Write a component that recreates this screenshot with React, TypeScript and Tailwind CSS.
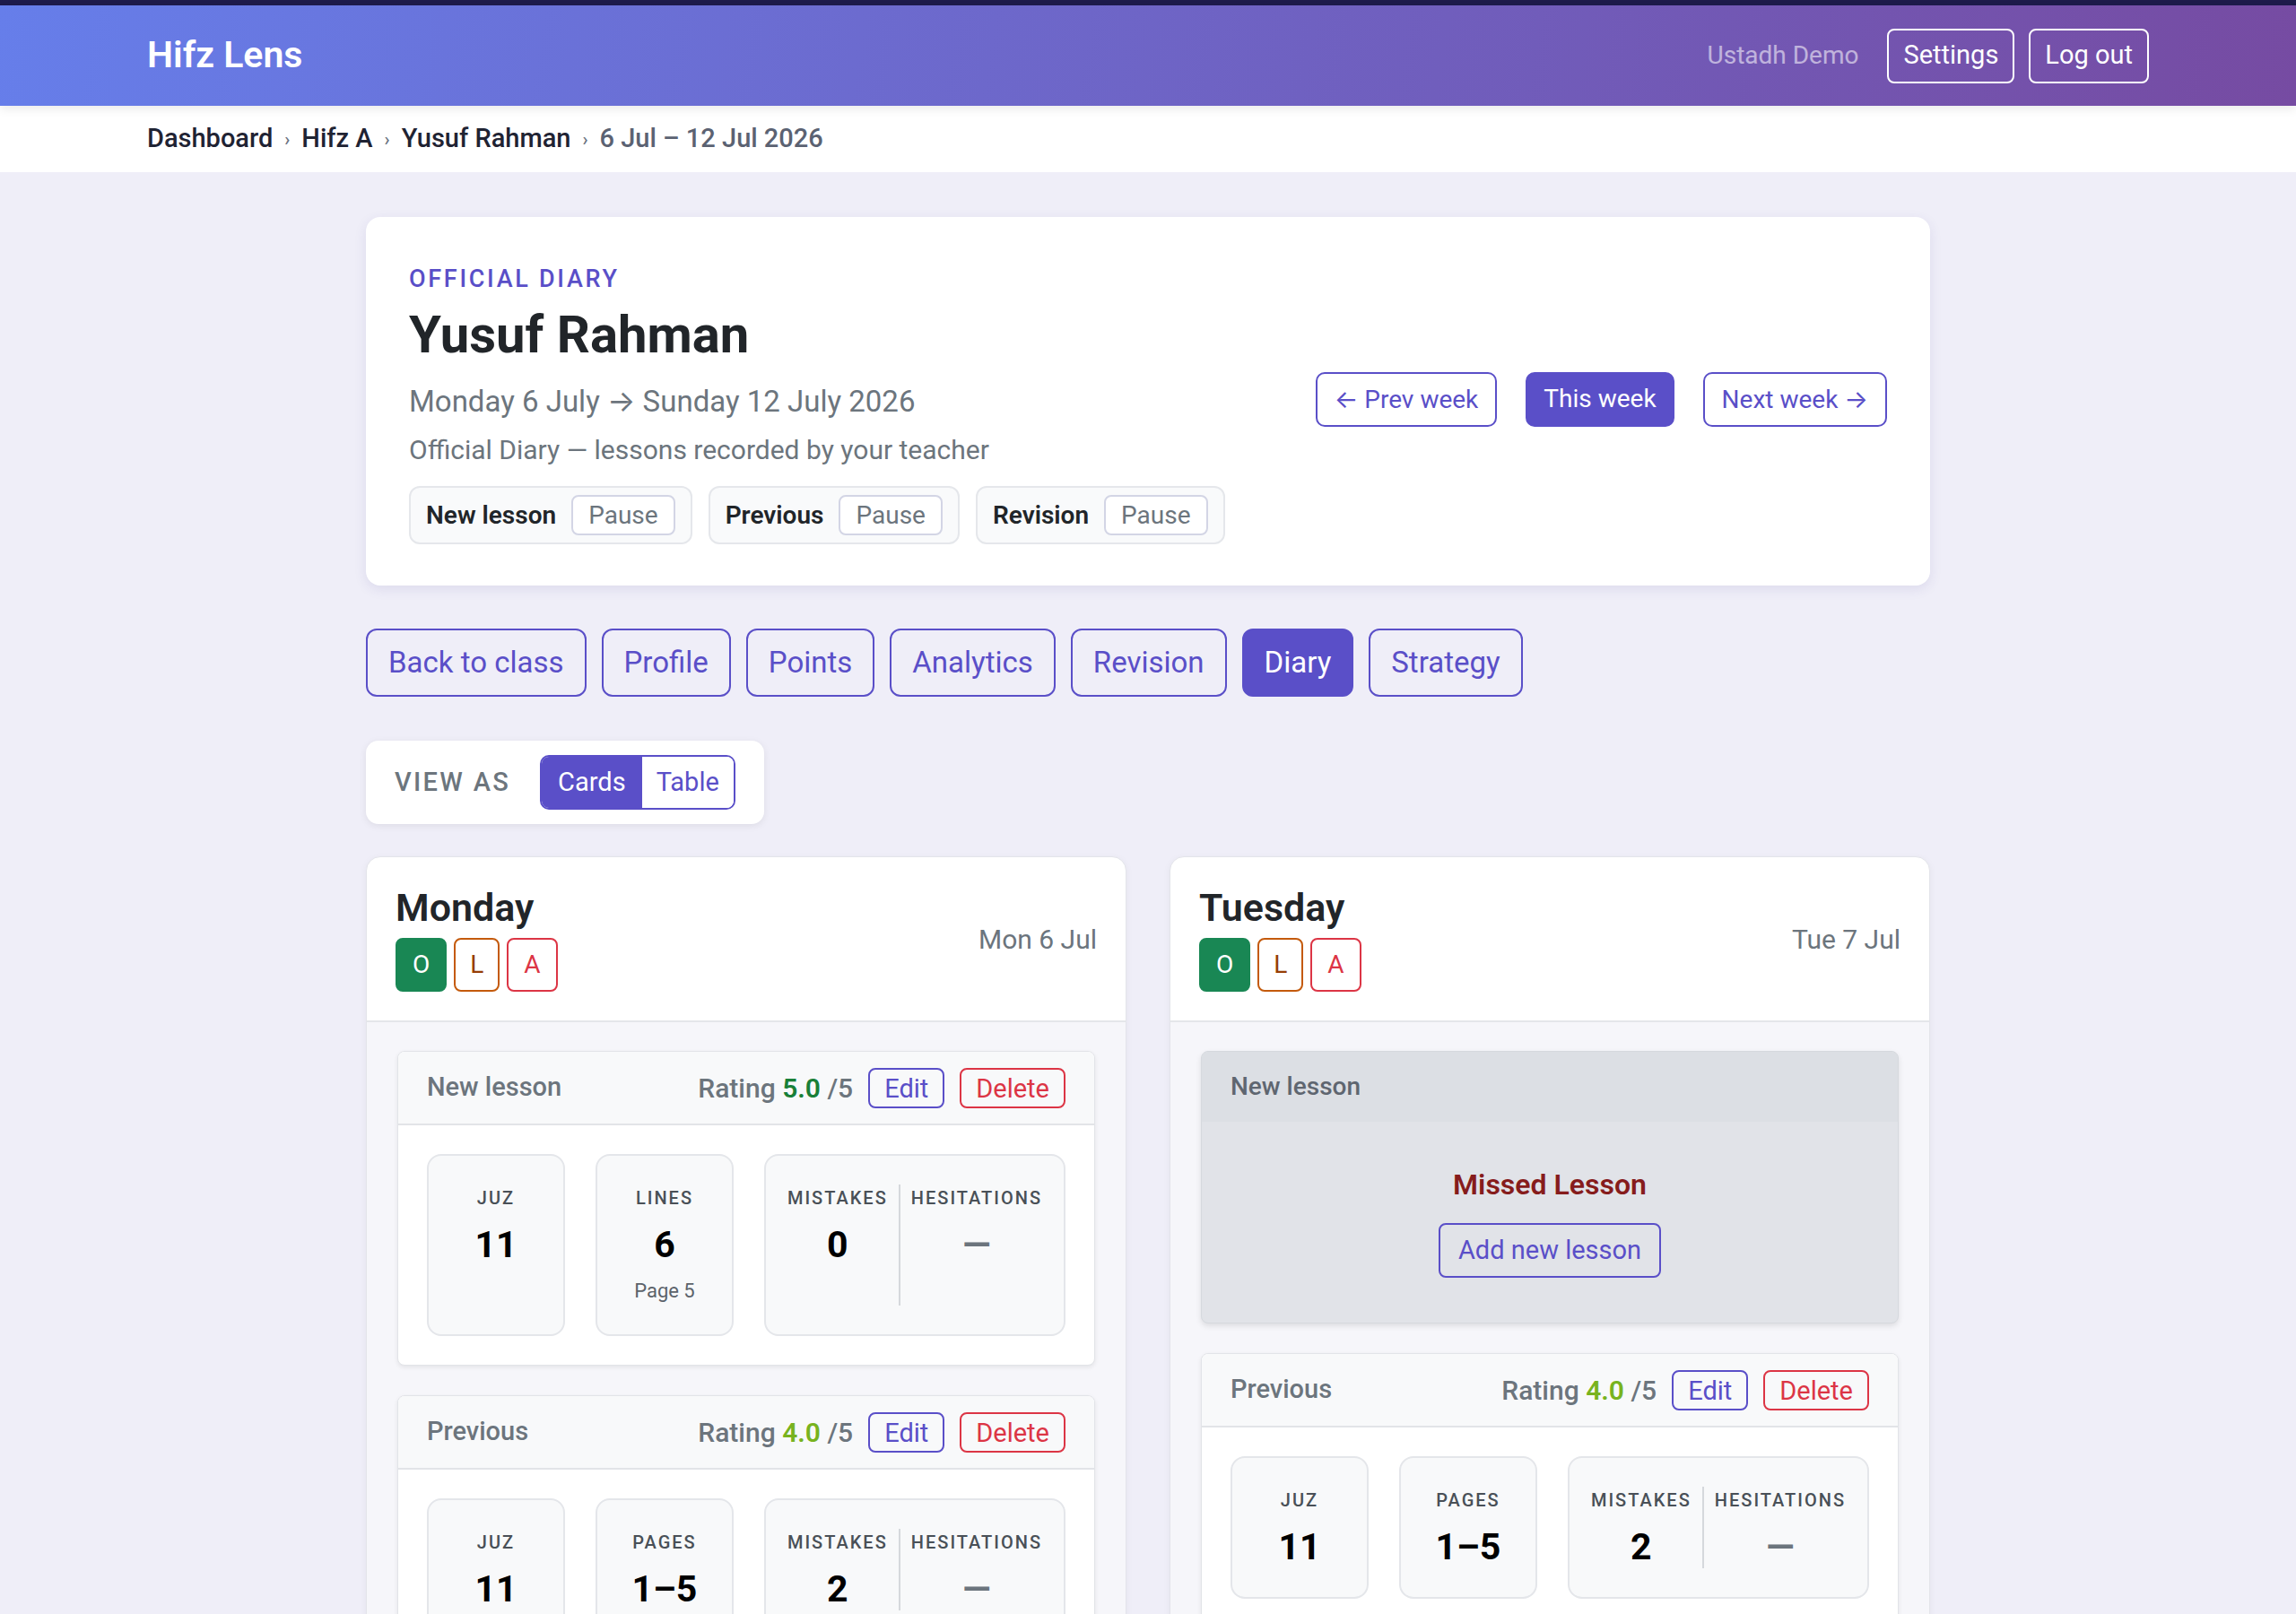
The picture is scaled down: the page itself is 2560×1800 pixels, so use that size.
import React from "react";

type Stat = { label: string; value: string; sub?: string };
type Lesson = {
  title: string;
  rating?: string;
  ratingColor?: string;
  missed?: boolean;
  stats?: Stat[];
  mistakes?: string;
  hesitations?: string;
};

function StatBox({ s }: { s: Stat }) {
  return (
    <div className="flex-1 flex flex-col items-center rounded-[16px] border-2 border-[#e4e6ea] bg-[#f8f9fa] py-[32px]">
      <div className="text-[20px] leading-[30px] tracking-[0.1em] font-medium text-[#495057] uppercase">{s.label}</div>
      <div className="mt-[13px] text-[41px] leading-[48px] font-bold text-[#000]">{s.value}</div>
      {s.sub && <div className="mt-[11px] text-[22px] leading-[33px] text-[#5c636a]">{s.sub}</div>}
    </div>
  );
}

function LessonCard({ l }: { l: Lesson }) {
  if (l.missed) {
    return (
      <div className="rounded-[8px] border border-[#d6d9de] bg-[#e1e3e8] shadow-[0_3px_6px_rgba(0,0,0,0.10)] overflow-hidden">
        <div className="h-[78px] px-[32px] flex items-center bg-[#dcdfe4] text-[28px] font-medium text-[#5f6670]">{l.title}</div>
        <div className="flex flex-col items-center pt-[48px] pb-[50px]">
          <div className="text-[32px] leading-[45px] font-semibold text-[#861c1c]">Missed Lesson</div>
          <button className="mt-[20px] h-[61px] px-[20px] rounded-[8px] border-2 border-[#5a4fc8] text-[29px] text-[#5a4fc8]">Add new lesson</button>
        </div>
      </div>
    );
  }
  return (
    <div className="rounded-[8px] border border-[#e2e4e8] bg-white shadow-[0_2px_5px_rgba(0,0,0,0.08)] overflow-hidden">
      <div className="h-[82px] px-[32px] flex items-center justify-between bg-[#f8f9fa] border-b-2 border-[#e2e4e8]">
        <div className="text-[29px] font-medium text-[#6c757d]">{l.title}</div>
        <div className="flex items-center gap-[17px]">
          <div className="text-[30px] font-medium text-[#6c757d]">
            Rating <span className="font-semibold" style={{ color: l.ratingColor }}>{l.rating}</span> /5
          </div>
          <button className="h-[45px] px-[16px] rounded-[8px] border-2 border-[#5a4fc8] text-[29px] text-[#5a4fc8]">Edit</button>
          <button className="h-[45px] px-[16px] rounded-[8px] border-2 border-[#dc3545] text-[29px] text-[#dc3545]">Delete</button>
        </div>
      </div>
      <div className="p-[32px] flex gap-[34px]">
        {l.stats!.map((s) => (
          <StatBox key={s.label} s={s} />
        ))}
        <div className="shrink-0 flex rounded-[16px] border-2 border-[#e4e6ea] bg-[#f8f9fa] px-[24px] py-[32px]">
          <div className="flex flex-col items-center pr-[12px]">
            <div className="text-[20px] leading-[30px] tracking-[0.1em] font-medium text-[#495057]">MISTAKES</div>
            <div className="mt-[13px] text-[41px] leading-[48px] font-bold text-[#000]">{l.mistakes}</div>
          </div>
          <div className="flex flex-col items-center pl-[12px] border-l-2 border-[#d5d8dc]">
            <div className="text-[20px] leading-[30px] tracking-[0.1em] font-medium text-[#495057]">HESITATIONS</div>
            <div className="mt-[13px] text-[41px] leading-[48px] font-bold text-[#6c757d]">{l.hesitations}</div>
          </div>
        </div>
      </div>
    </div>
  );
}

function DayCard({ day, date, lessons }: { day: string; date: string; lessons: Lesson[] }) {
  return (
    <div className="rounded-[16px] border border-[#e3e4ea] bg-white shadow-[0_2px_8px_rgba(0,0,0,0.05)] overflow-hidden">
      <div className="h-[184px] px-[32px] flex items-center justify-between border-b-2 border-[#e4e6ea]">
        <div className="flex flex-col">
          <div className="text-[43px] leading-[48px] font-semibold text-[#212529]">{day}</div>
          <div className="mt-[10px] flex gap-[8px]">
            <span className="h-[60px] px-[17px] flex items-center rounded-[8px] border-2 border-[#198754] bg-[#198754] text-[28px] text-white">O</span>
            <span className="h-[60px] px-[16px] flex items-center rounded-[8px] border-2 border-[#c45a0c] text-[28px] text-[#963d06]">L</span>
            <span className="h-[60px] px-[17px] flex items-center rounded-[8px] border-2 border-[#dc3545] text-[28px] text-[#dc3545]">A</span>
          </div>
        </div>
        <div className="text-[30px] text-[#6c757d]">{date}</div>
      </div>
      <div className="bg-[#f6f6fa] px-[34px] py-[32px] flex flex-col gap-[33px]">
        {lessons.map((l, i) => (
          <LessonCard key={i} l={l} />
        ))}
      </div>
    </div>
  );
}

export default function App() {
  const monday: Lesson[] = [
    {
      title: "New lesson",
      rating: "5.0",
      ratingColor: "#198038",
      stats: [
        { label: "JUZ", value: "11" },
        { label: "LINES", value: "6", sub: "Page 5" },
      ],
      mistakes: "0",
      hesitations: "—",
    },
    {
      title: "Previous",
      rating: "4.0",
      ratingColor: "#78b31f",
      stats: [
        { label: "JUZ", value: "11" },
        { label: "PAGES", value: "1–5" },
      ],
      mistakes: "2",
      hesitations: "—",
    },
    {
      title: "Revision",
      rating: "4.0",
      ratingColor: "#78b31f",
      stats: [
        { label: "JUZ", value: "10" },
        { label: "PAGES", value: "1–20" },
      ],
      mistakes: "1",
      hesitations: "—",
    },
  ];
  const tuesday: Lesson[] = [
    { title: "New lesson", missed: true },
    {
      title: "Previous",
      rating: "4.0",
      ratingColor: "#78b31f",
      stats: [
        { label: "JUZ", value: "11" },
        { label: "PAGES", value: "1–5" },
      ],
      mistakes: "2",
      hesitations: "—",
    },
    {
      title: "Revision",
      rating: "4.0",
      ratingColor: "#78b31f",
      stats: [
        { label: "JUZ", value: "10" },
        { label: "PAGES", value: "1–20" },
      ],
      mistakes: "1",
      hesitations: "—",
    },
  ];
  const tabs = ["Back to class", "Profile", "Points", "Analytics", "Revision", "Diary", "Strategy"];

  return (
    <div className="min-h-screen bg-[#efeef8] font-['Roboto',sans-serif] pb-[80px]">
      <div className="h-[6px] bg-[#1e1b4b]" />
      <header className="relative z-10 h-[112px] px-[164px] flex items-center justify-between bg-[linear-gradient(100deg,#667eea_0%,#764ba2_100%)] shadow-[0_4px_10px_rgba(0,0,0,0.08)]">
        <div className="text-[41px] font-semibold text-white">Hifz Lens</div>
        <div className="flex items-center">
          <span className="text-[28px] text-white/55 mr-[32px]">Ustadh Demo</span>
          <button className="h-[61px] px-[16px] rounded-[8px] border-2 border-white text-[29px] text-white">Settings</button>
          <button className="ml-[16px] h-[61px] px-[16px] rounded-[8px] border-2 border-white text-[29px] text-white">Log out</button>
        </div>
      </header>
      <nav className="h-[74px] bg-white px-[164px] flex items-center text-[29px] font-medium">
        <span className="text-[#1f2333]">Dashboard</span>
        <span className="mx-[13px] text-[20px] text-[#6b7280]">›</span>
        <span className="text-[#1f2333]">Hifz A</span>
        <span className="mx-[13px] text-[20px] text-[#6b7280]">›</span>
        <span className="text-[#1f2333]">Yusuf Rahman</span>
        <span className="mx-[13px] text-[20px] text-[#6b7280]">›</span>
        <span className="text-[#5b6272]">6 Jul – 12 Jul 2026</span>
      </nav>

      <main className="w-[1744px] mx-auto pt-[50px]">
        <section className="rounded-[16px] bg-white shadow-[0_4px_14px_rgba(60,50,140,0.10)] px-[48px] pt-[53px] pb-[46px] flex justify-between">
          <div className="flex flex-col">
            <div className="text-[27px] leading-[32px] tracking-[0.1em] font-medium text-[#5a4fc8]">OFFICIAL DIARY</div>
            <div className="mt-[13px] text-[58px] leading-[67px] font-bold text-[#212529]">Yusuf Rahman</div>
            <div className="mt-[16px] text-[33px] leading-[48px] text-[#6c757d]">
              Monday 6 July <span className="font-['Inter']">→</span> Sunday 12 July 2026
            </div>
            <div className="mt-[9px] text-[30px] leading-[42px] text-[#6c757d]">Official Diary — lessons recorded by your teacher</div>
            <div className="mt-[19px] flex gap-[18px]">
              {["New lesson", "Previous", "Revision"].map((p) => (
                <div key={p} className="h-[65px] px-[17px] flex items-center gap-[17px] rounded-[12px] border-2 border-[#e5e7eb] bg-[#f9fafb]">
                  <span className="text-[28px] font-semibold text-[#212529]">{p}</span>
                  <span className="h-[45px] px-[17px] flex items-center rounded-[8px] border-2 border-[#d3d5e5] bg-white text-[28px] text-[#6c757d]">Pause</span>
                </div>
              ))}
            </div>
          </div>
          <div className="flex items-center gap-[32px] pb-[12px]">
            <button className="h-[61px] px-[19px] rounded-[10px] border-2 border-[#5a4fc8] text-[28px] text-[#5a4fc8]">
              <span className="font-['Inter']">←</span> Prev week
            </button>
            <button className="h-[61px] px-[18px] rounded-[10px] border-2 border-[#5a4fc8] bg-[#5a4fc8] text-[28px] text-white">This week</button>
            <button className="h-[61px] px-[19px] rounded-[10px] border-2 border-[#5a4fc8] text-[28px] text-[#5a4fc8]">
              Next week <span className="font-['Inter']">→</span>
            </button>
          </div>
        </section>

        <div className="mt-[48px] flex gap-[17px]">
          {tabs.map((t) => (
            <button
              key={t}
              className={
                t === "Diary"
                  ? "h-[76px] px-[23px] rounded-[12px] border-2 border-[#5a4fc8] bg-[#5a4fc8] text-[33px] text-white"
                  : "h-[76px] px-[23px] rounded-[12px] border-2 border-[#5a4fc8] text-[33px] text-[#5a4fc8]"
              }
            >
              {t}
            </button>
          ))}
        </div>

        <div className="mt-[49px] inline-flex items-center gap-[33px] rounded-[14px] bg-white shadow-[0_2px_8px_rgba(0,0,0,0.08)] px-[32px] py-[16px]">
          <span className="text-[29px] tracking-[0.08em] font-medium text-[#6c757d]">VIEW AS</span>
          <div className="flex h-[61px] rounded-[10px] border-2 border-[#5a4fc8] overflow-hidden text-[29px]">
            <span className="px-[18px] flex items-center bg-[#5a4fc8] text-white">Cards</span>
            <span className="px-[16px] flex items-center bg-white text-[#5a4fc8]">Table</span>
          </div>
        </div>

        <div className="mt-[36px] grid grid-cols-2 gap-[48px] items-start">
          <DayCard day="Monday" date="Mon 6 Jul" lessons={monday} />
          <DayCard day="Tuesday" date="Tue 7 Jul" lessons={tuesday} />
        </div>
      </main>
    </div>
  );
}
